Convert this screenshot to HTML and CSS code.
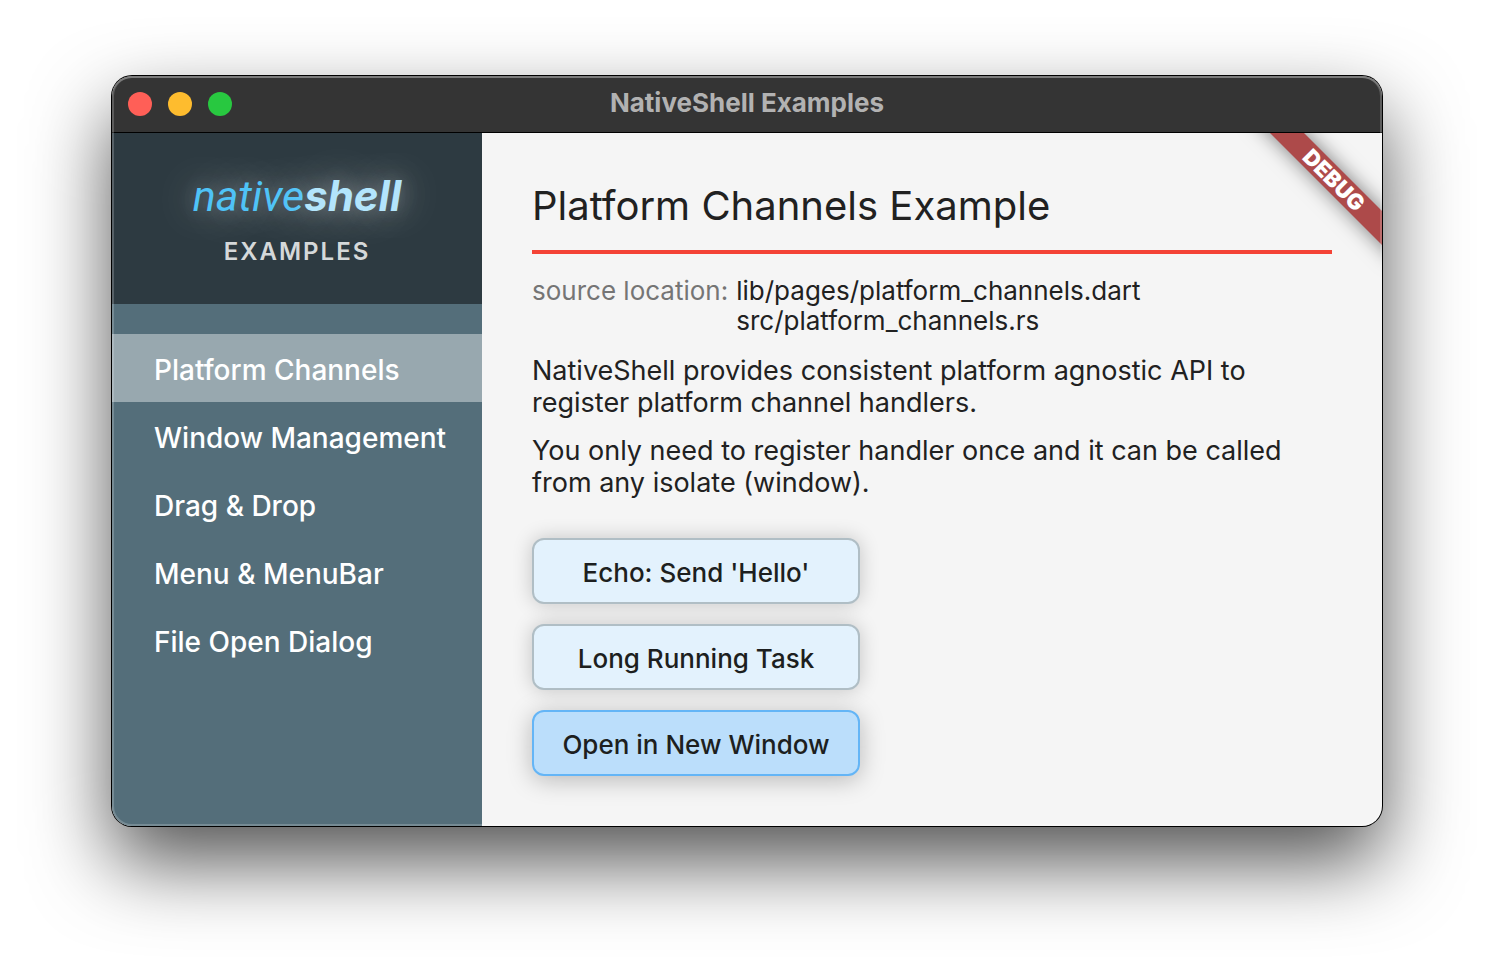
FILE: index.html
```html
<!DOCTYPE html>
<html lang="en">
<head>
<meta charset="utf-8">
<title>NativeShell Examples</title>
<link rel="stylesheet" href="styles.css">
</head>
<body>
<div class="window">
  <header class="titlebar">
    <div class="lights">
      <button class="light close" aria-label="Close"></button>
      <button class="light minimize" aria-label="Minimize"></button>
      <button class="light zoom" aria-label="Zoom"></button>
    </div>
    <div class="window-title">NativeShell Examples</div>
  </header>
  <div class="body">
    <aside class="sidebar">
      <div class="brand">
        <div class="logo"><span class="logo-light">native</span><b>shell</b></div>
        <div class="subtitle">EXAMPLES</div>
      </div>
      <nav class="nav">
        <a class="nav-item selected" href="#channels">Platform Channels</a>
        <a class="nav-item" href="#windows">Window Management</a>
        <a class="nav-item" href="#drag">Drag &amp; Drop</a>
        <a class="nav-item" href="#menu">Menu &amp; MenuBar</a>
        <a class="nav-item" href="#file">File Open Dialog</a>
      </nav>
    </aside>
    <main class="content">
      <h1 class="heading">Platform Channels Example</h1>
      <div class="source">
        <span class="source-label">source location:</span>
        <div class="source-files"><div>lib/pages/platform_channels.dart</div><div>src/platform_channels.rs</div></div>
      </div>
      <p class="text">NativeShell provides consistent platform agnostic API to register platform channel handlers.</p>
      <p class="text">You only need to register handler once and it can be called from any isolate (window).</p>
      <div class="actions">
        <button class="action">Echo: Send 'Hello'</button>
        <button class="action">Long Running Task</button>
        <button class="action hovered">Open in New Window</button>
      </div>
      <div class="banner-clip"><div class="banner">DEBUG</div></div>
    </main>
  </div>
</div>
</body>
</html>
```
FILE: styles.css
```css
* { box-sizing: border-box; }
body {
  margin: 0;
  min-height: 100vh;
  padding: 76px 112px 148px;
  display: flex;
  background: #fff;
  color: #212121;
  font-family: Inter, "Liberation Sans", sans-serif;
}
.window {
  flex: 1;
  display: flex;
  flex-direction: column;
  position: relative;
  border-radius: 20px;
  overflow: hidden;
  background: #f5f5f5;
  box-shadow: 0 0 0 1px #000, 0 36px 80px rgba(0, 0, 0, .68);
}
.window::after {
  content: "";
  position: absolute;
  inset: 0;
  border-radius: 20px;
  pointer-events: none;
  box-shadow: inset 0 0 0 2px rgba(255, 255, 255, .2), inset 0 2px 0 rgba(255, 255, 255, .2);
}
.titlebar {
  height: 57px;
  padding: 0 16px;
  display: grid;
  grid-template-columns: 1fr auto 1fr;
  align-items: center;
  background: #343434;
  border-bottom: 1px solid #000;
}
.lights { display: flex; gap: 16px; }
.light {
  width: 24px;
  height: 24px;
  padding: 0;
  border: 0;
  border-radius: 50%;
}
.close { background: #ff5f57; }
.minimize { background: #febc2e; }
.zoom { background: #28c840; }
.window-title {
  padding-bottom: 2px;
  color: #b2b2b2;
  font-size: 26px;
  line-height: 32px;
  font-weight: 700;
}
.body { flex: 1; display: flex; }
.sidebar { width: 370px; background: #546e7a; }
.brand {
  height: 171px;
  padding-top: 39px;
  text-align: center;
  background: #2d3a41;
}
.logo {
  font-size: 42px;
  line-height: 48px;
  font-style: italic;
  color: #4fc3f7;
  text-shadow: 0 0 40px rgba(255, 255, 255, .5), 0 0 20px rgba(255, 255, 255, .25);
}
.logo-light {
  font-family: Roboto, sans-serif;
  font-size: 43px;
}
.logo b { color: #b3e5fc; }
.subtitle {
  margin-top: 16px;
  color: #d5d8d9;
  font-size: 24px;
  line-height: 32px;
  font-weight: 600;
  letter-spacing: 2px;
}
.nav { padding-top: 30px; }
.nav-item {
  display: block;
  padding-left: 42px;
  color: #fff;
  font-size: 28px;
  line-height: 73px;
  height: 68px;
  font-weight: 450;
  text-decoration: none;
}
.selected { background: #98a8af; }
.content {
  flex: 1;
  position: relative;
  padding: 48px 50px;
}
.heading {
  margin: 0 0 22px;
  padding-bottom: 19px;
  border-bottom: 4px solid #f44336;
  font-size: 40px;
  line-height: 50px;
  font-weight: 400;
}
.source {
  display: flex;
  gap: 8px;
  font-size: 26px;
  line-height: 30px;
}
.source-label { color: #757575; }
.text {
  max-width: 780px;
  margin: 16px 0;
  font-size: 27px;
  line-height: 32px;
}
.source + .text { margin-top: 19px; }
.actions {
  width: 328px;
  margin-top: 39px;
  display: grid;
  gap: 20px;
}
.action {
  height: 66px;
  padding: 2px 0 0;
  border: 2px solid #b0bec5;
  border-radius: 12px;
  background: #e3f2fd;
  color: #1d1f20;
  font-family: inherit;
  font-size: 26px;
  font-weight: 500;
  box-shadow: 0 0 20px rgba(0, 0, 0, .2);
}
.hovered {
  border-color: #64b5f6;
  background: #bbdefb;
  box-shadow: 0 4px 24px rgba(0, 0, 0, .25);
}
.banner-clip {
  position: absolute;
  top: 0;
  right: 0;
  width: 160px;
  height: 160px;
  overflow: hidden;
}
.banner {
  position: absolute;
  top: 35px;
  right: -52px;
  width: 200px;
  transform: rotate(45deg);
  background: #ad4a4a;
  color: #fff;
  text-align: center;
  font-size: 22px;
  line-height: 24px;
  font-weight: 900;
  box-shadow: 0 0 20px rgba(0, 0, 0, .5);
}
```
